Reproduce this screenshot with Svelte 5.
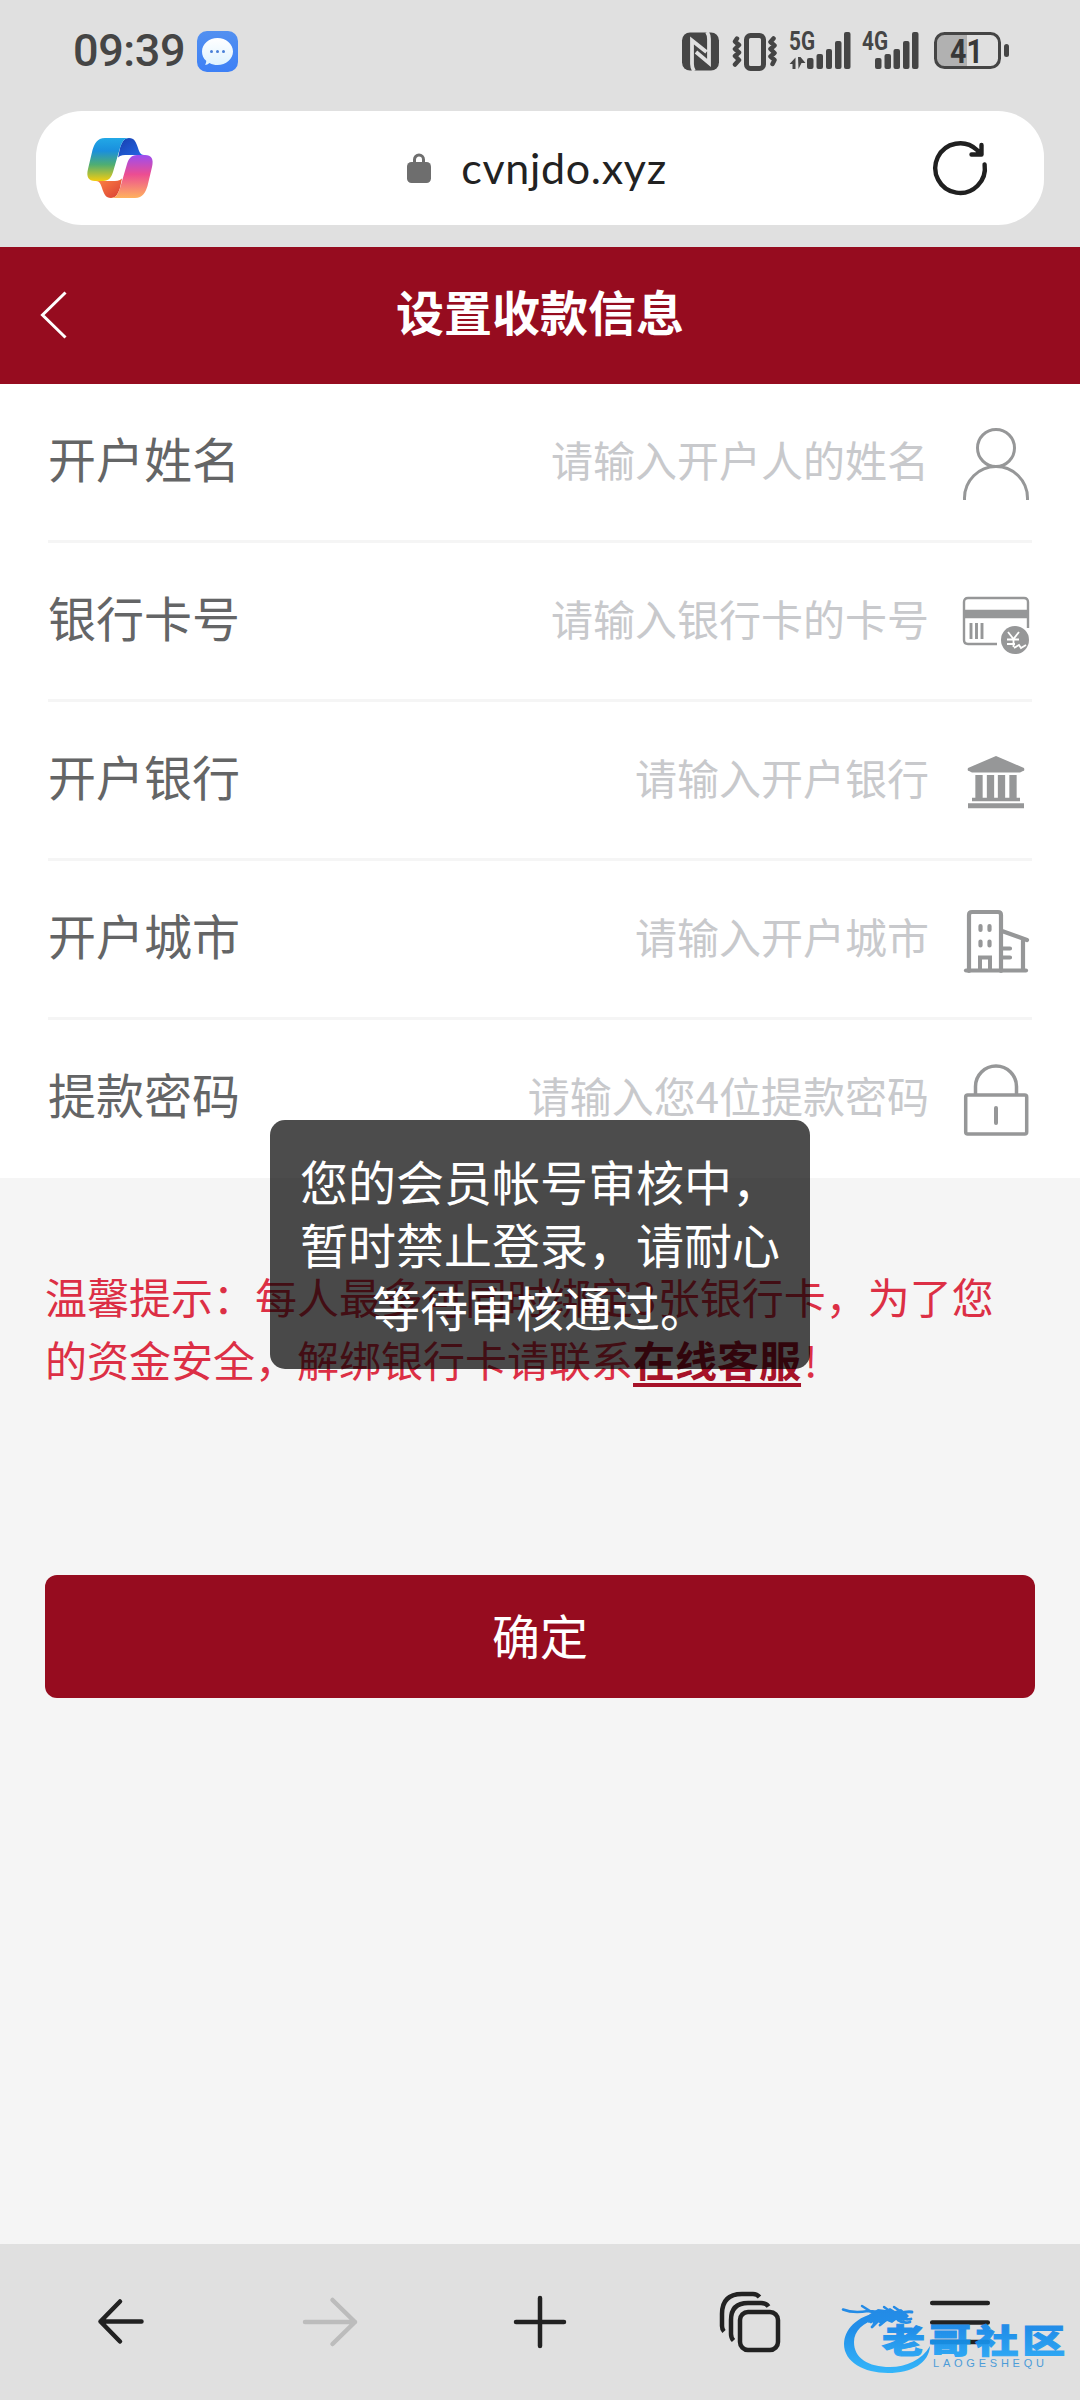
<script>
  const fields = [
    { label: '开户姓名', hint: '请输入开户人的姓名', icon: 'user' },
    { label: '银行卡号', hint: '请输入银行卡的卡号', icon: 'card' },
    { label: '开户银行', hint: '请输入开户银行', icon: 'bank' },
    { label: '开户城市', hint: '请输入开户城市', icon: 'city' },
    { label: '提款密码', hint: '请输入您4位提款密码', icon: 'lock' }
  ];
</script>

<div class="screen">
  <header class="chrome">
    <div class="status">
      <span class="time">09:39</span>
      <svg class="msg" width="41" height="41" viewBox="0 0 41 41">
        <defs>
          <linearGradient id="bubbleFill" x1="0" y1="0" x2="0" y2="1"><stop offset="0" stop-color="#fff" /><stop offset="1" stop-color="#dff3ff" /></linearGradient>
          <linearGradient id="tileFill" x1="0" y1="0" x2="0" y2="1"><stop offset="0" stop-color="#5290f0" /><stop offset="1" stop-color="#3d80f6" /></linearGradient>
        </defs>
        <rect width="41" height="41" rx="10" fill="url(#tileFill)" />
        <path d="M20.500 7C29 7 36 13 36 20.500S29 34 20.500 34c-3 0-5.500-.6-8-2-1.500 1.300-3 1.800-4.500 1.800 1-1.200 1.300-2.500 1.200-4C6.500 27.500 5 24.200 5 20.500 5 13 12 7 20.500 7z" fill="url(#bubbleFill)" />
        <g fill="#4a80d8"><circle cx="14.500" cy="20.500" r="1.500" /><circle cx="20.500" cy="20.500" r="1.500" /><circle cx="26.500" cy="20.500" r="1.500" /></g>
      </svg>
      <svg class="indicators" width="330" height="42" viewBox="0 0 330 42">
        <rect x="2" y="2.500" width="37" height="38" rx="8" fill="#454545" />
        <path d="M14 41q-2-3-2-7V10.500L26.500 22M27 2q2 3 2 7v24L16 22" fill="none" stroke="#e0e0e0" stroke-width="3.800" />
        <g fill="none" stroke="#454545">
          <rect x="66.500" y="5.500" width="17" height="33" rx="4" stroke-width="5" />
          <path d="M57 8.500l-2 3 4 3.500-4 4 4 3.500-4 3.500 4 4-4 4.500M93.500 8.500l-3 3.500 4 3.500-4 3.500 4 4-4 3.500 4 3.500-2 4" stroke-width="4.500" stroke-linecap="round" stroke-linejoin="round" />
        </g>
        <g class="net" fill="#454545">
          <text x="109" y="20" textLength="26" lengthAdjust="spacingAndGlyphs">5G</text>
          <text x="182" y="20" textLength="26" lengthAdjust="spacingAndGlyphs">4G</text>
        </g>
        <g fill="#454545">
          <path d="M109.500 34l6-6.500V39h-3v-5h-3zM118 27h2.500l5 6h-4L118.500 39z" />
          <rect x="127" y="28" width="6.500" height="11" rx="2" /><rect x="136.500" y="24" width="6.500" height="15" rx="2" /><rect x="146" y="19" width="6" height="20" rx="2" /><rect x="155" y="11" width="6.500" height="28" rx="2" /><rect x="164" y="2" width="6.500" height="37" rx="2" />
          <rect x="195" y="28" width="6.500" height="11" rx="2" /><rect x="204.500" y="24" width="6.500" height="15" rx="2" /><rect x="213.500" y="19" width="6.500" height="20" rx="2" /><rect x="223" y="11" width="6.500" height="28" rx="2" /><rect x="232" y="2" width="6.500" height="37" rx="2" />
          <rect x="324" y="14" width="5" height="13" rx="2.500" />
        </g>
        <path d="M264 4h23v32h-23q-8 0-8-8V12q0-8 8-8z" fill="#b1b1b1" />
        <rect x="255.500" y="3.500" width="64" height="34" rx="9" fill="none" stroke="#454545" stroke-width="3" />
        <text class="batt" x="270" y="32.500" textLength="33" lengthAdjust="spacingAndGlyphs" fill="#383838">41</text>
      </svg>
    </div>
    <div class="address">
      <svg class="copilot" width="66" height="60" viewBox="0 0 66 60">
        <defs>
          <linearGradient id="c1" x1="0" y1="0" x2="0" y2="1"><stop offset="0" stop-color="#22a8e6" /><stop offset=".3" stop-color="#1a8fdd" /><stop offset=".62" stop-color="#4fae72" /><stop offset="1" stop-color="#f4cc10" /></linearGradient>
          <linearGradient id="c2" x1="0" y1="0" x2="0" y2="1"><stop offset="0" stop-color="#9c4df0" /><stop offset=".45" stop-color="#ec4d92" /><stop offset="1" stop-color="#ffb25e" /></linearGradient>
          <linearGradient id="c3" x1="0" y1="0" x2="1" y2="1"><stop offset="0" stop-color="#173fae" /><stop offset="1" stop-color="#2569e8" /></linearGradient>
          <linearGradient id="c4" x1="0" y1="0" x2="1" y2="1"><stop offset="0" stop-color="#ff8643" /><stop offset="1" stop-color="#d93e35" /></linearGradient>
        </defs>
        <path d="M42 0c5.500 0 7 4 9 10 1.300 4 2.500 7 6 7H41c-4 0-7.500 0-10 2.500L33 10C35 4 37 0 42 0z" fill="url(#c3)" />
        <path d="M24 60c-5.500 0-7-4-9-10-1.300-4-2.500-7-6-7h16c4 0 7.500 0 10-2.500L33 50c-2 6-4 10-9 10z" fill="url(#c4)" />
        <path d="M42 0H18C10 0 7.500 6 5.500 12L1 31c-2 8 .5 12 7 12h8c6 0 8.500-4 10-9l7-24C35 4 37 0 42 0z" fill="url(#c1)" />
        <path d="M24 60h24c8 0 10.500-6 12.500-12L65 29c2-8-.5-12-7-12h-8c-6 0-8.500 4-10 9l-7 24c-2 6-4 10-9 10z" fill="url(#c2)" />
      </svg>
      <div class="url">
        <svg width="24" height="30" viewBox="0 0 24 30">
          <path d="M7.500 12V6.500a4.500 4.500 0 0 1 9 0V12" fill="none" stroke="#6e6e6e" stroke-width="3" />
          <rect y="9" width="24" height="21" rx="4.500" fill="#6e6e6e" />
        </svg>
        <span>cvnjdo.xyz</span>
      </div>
      <svg class="reload" width="54" height="54" viewBox="0 0 54 54" fill="none" stroke="#202020" stroke-width="4.400" stroke-linecap="round" stroke-linejoin="round">
        <path d="M51.600 23.500A24.800 24.800 0 1 1 44 9l4.500 4.500M48.500 4v9.500H38.500" />
      </svg>
    </div>
  </header>

  <nav class="title">
    <svg width="28" height="48" viewBox="0 0 28 48"><path d="M25.500 1.500L2.500 24l23 22.500" fill="none" stroke="#fff" stroke-width="3" /></svg>
    <h1>设置收款信息</h1>
  </nav>

  <main>
    <section class="form">
      {#each fields as f}
        <div class="row">
          <span class="label">{f.label}</span>
          <span class="hint">{f.hint}</span>
          <svg width="68" height="76" viewBox="0 0 68 76" fill="none" stroke="#969798" stroke-width="3">
            {#if f.icon === 'user'}
              <circle cx="34" cy="21" r="18.500" /><path d="M2.500 73V71a31.500 31.500 0 0 1 63 0v2" />
            {:else if f.icon === 'card'}
              <g transform="translate(0 -2)">
                <path d="M66 44V18q0-4-4-4H6q-4 0-4 4v38q0 4 4 4h29" stroke-width="2.400" />
                <path d="M2 30h64" stroke-width="8.500" />
                <path d="M9 39v16M14.500 39v16M20 39v16" stroke-width="2.900" />
                <circle cx="53" cy="56" r="14" fill="#969798" stroke="none" />
                <path d="M46 48l5.500 7 5.500-7M45 55.500h12M45 60h8M51.500 55v8M52 64l5-3 2 3 5-3" stroke="#fff" stroke-width="1.800" />
              </g>
            {:else if f.icon === 'bank'}
              <g transform="translate(0 -2)">
                <path d="M34 13l28 12q1 3-1 3l-3 1.500H10L7 28q-2 0-1-3z" fill="#969798" stroke="none" />
                <path d="M17 32v25M28.500 32v25M39.500 32v25M51 32v25" stroke-width="7.300" />
                <path d="M10 56.500h48" stroke-width="3.500" />
                <path d="M6 62.700h56" stroke-width="5" />
              </g>
            {:else if f.icon === 'city'}
              <path d="M7 67V11q0-3 3-3h26q3 0 3 3v56M40 27l25 9M61 36v30" stroke-width="4.200" stroke-linecap="round" />
              <path d="M4 66.500h60" stroke-width="4.200" stroke-linecap="round" />
              <path d="M18.500 22v4M27.500 22v4M18.500 37.500v4M27.500 37.500v4M40 44.500h8M40 53.500h8" stroke-width="4.200" stroke-linecap="round" />
              <path d="M18 66V53.500h10V66" stroke-width="4" />
            {:else}
              <g transform="translate(0 -1)">
                <path d="M13.500 34V24.500a20.500 20.500 0 0 1 41 0V34" stroke-width="3.500" />
                <rect x="3.700" y="33" width="61" height="39" rx="2" stroke-width="3.500" />
                <path d="M34 46v15" stroke-width="4" stroke-linecap="round" />
              </g>
            {/if}
          </svg>
        </div>
      {/each}
    </section>

    <p class="notice">温馨提示：每人最多可同时绑定<span class="num">3</span>张银行卡，为了您<br />的资金安全，解绑银行卡请联系<b>在线客服</b><span class="bang">!</span></p>
    <button>确定</button>
  </main>

  <footer>
    <svg width="60" height="60" viewBox="0 0 60 60"><path d="M51.500 29.500H10.500M30 9.500L10.500 29.500 30 49.500" /></svg>
    <svg class="off" width="60" height="60" viewBox="0 0 60 60"><path d="M5 30h50M32.500 8L55 30 32.500 52" /></svg>
    <svg width="60" height="60" viewBox="0 0 60 60"><path d="M6 30h48M30 6v48" /></svg>
    <svg width="60" height="60" viewBox="0 0 60 60"><rect x="20" y="20" width="38" height="38" rx="8" /><path class="cut" d="M4 39.500Q2 37.500 2 34V22Q2 2 22 2h11q4 0 6.500 3M13.500 48.500Q11 46 11 42V28q0-17 17-17h13q5 0 7.500 3.500" /></svg>
    <svg width="60" height="60" viewBox="0 0 60 60"><path d="M2.200 11h55.600M2.200 30.500h55.600M2.200 50h55.600" /></svg>
  </footer>

  <div class="toast">您的会员帐号审核中，<br />暂时禁止登录，请耐心<br />等待审核通过。</div>

  <svg class="mark" width="224" height="76" viewBox="0 0 224 76">
    <defs><linearGradient id="wm" gradientUnits="userSpaceOnUse" x1="0" y1="4" x2="0" y2="72"><stop offset="0" stop-color="#1583e6" /><stop offset=".35" stop-color="#1288ea" /><stop offset="1" stop-color="#27b4fd" /></linearGradient></defs>
    <g fill="url(#wm)">
      <path d="M38 10C14 14 2 28 2 42c0 18 20 29 44 29s41-10 42-27c-8 14-24 21-40 21-22 0-36-9-36-25 0-11 9-20 24-23z" />
      <path d="M28 12l8-5 8 1 4-2 5 3 6-2 4 3 4 4-5 5-8-1-4 3-5-2-6 3-3-2-6 5 1-5-5 1 2-4-6 1z" />
    </g>
    <g fill="none" stroke="url(#wm)" stroke-linecap="round">
      <path d="M1 7.500q10 4 25 1.500l10 2" stroke-width="2.600" />
      <path d="M20 4l8 5 9 1M42 5l7 5M52 5l6 4" stroke-width="2.400" />
      <path d="M58 12q6-3 12-2M58 16q6 2 11 1M56 18q6 4 12 2M38 17l-8 8M44 18l-6 5M33 17l-4 3" stroke-width="2.800" />
    </g>
    <text class="brand" x="40" y="51" textLength="187" lengthAdjust="spacingAndGlyphs" fill="url(#wm)" stroke="url(#wm)" stroke-width="1">老哥社区</text>
    <text class="latin" x="91" y="65" textLength="111" lengthAdjust="spacing">LAOGESHEQU</text>
  </svg>
</div>

<style>
  :global(body) { margin: 0; }
  .screen { position: relative; display: flex; flex-direction: column; width: 1080px; height: 2400px; background: #f5f5f5; font-family: "Noto Sans CJK SC", sans-serif; overflow: hidden; }
  svg { flex: none; display: block; overflow: visible; }
  .chrome { height: 247px; box-sizing: border-box; padding: 30px 36px 0; background: #e0e0e0; }
  .status { display: flex; align-items: center; height: 42px; padding-left: 37px; }
  .time { width: 124px; font: 500 45px/42px Roboto, sans-serif; letter-spacing: -.4px; color: #454545; white-space: nowrap; }
  .indicators { margin-left: auto; margin-right: 34px; }
  .indicators > rect:first-child { shape-rendering: auto; }
  .net { font: 700 25px Roboto, sans-serif; }
  .batt { font: 700 34px Roboto, sans-serif; }
  .address { display: flex; align-items: center; justify-content: space-between; height: 114px; margin-top: 39px; padding: 0 57px 0 51px; box-sizing: border-box; border-radius: 46px; background: #fff; }
  .url { display: flex; align-items: center; gap: 30px; margin-right: 12px; color: #222; font: 400 43px/60px Lato, sans-serif; letter-spacing: .7px; }
  .title { display: flex; align-items: center; height: 137px; box-sizing: border-box; padding: 0 40px 2px; background: #960c1f; color: #fff; }
  h1 { flex: 1; margin: 0 28px 10px 0; text-align: center; font-size: 48px; line-height: 64px; font-weight: 700; }
  main { flex: 1; }
  .form { height: 794px; background: #fff; }
  .row { display: flex; align-items: center; height: 159px; box-sizing: border-box; margin: 0 48px; border-bottom: 3px solid #f5f5f5; }
  .row:last-child { height: 158px; border-color: transparent; }
  .row svg { margin: 6px 2px 0 0; }
  .label { margin-bottom: 10px; font-size: 48px; color: #646566; }
  .hint { margin-left: auto; margin-right: 33px; margin-bottom: 7px; font-size: 42px; color: #c8c9cc; }
  .notice { margin: 86px 45px 0; font-size: 42px; line-height: 63px; color: #dc2f45; white-space: nowrap; }
  .notice b { color: #a61229; text-decoration: underline; text-decoration-thickness: 4px; text-underline-offset: 6px; }
  .num { letter-spacing: 1.500px; }
  .bang { margin-left: 3px; }
  button { display: block; width: 990px; height: 123px; margin: 185px 45px 0; padding: 0 0 5px; border: 0; border-radius: 12px; background: #960c1f; color: #fff; font: 400 48px "Noto Sans CJK SC", sans-serif; }
  footer { display: flex; align-items: center; justify-content: space-between; height: 156px; box-sizing: border-box; padding: 0 90px; background: #e0e0e0; }
  footer svg { fill: none; stroke: #222; stroke-width: 4.500; stroke-linecap: round; stroke-linejoin: round; }
  footer .off { stroke: #bcbcbc; }
  footer .cut { stroke-linecap: butt; }
  .toast { position: absolute; left: 270px; top: 1120px; width: 540px; height: 249px; box-sizing: border-box; padding-top: 29px; border-radius: 15px; background: rgba(0, 0, 0, .7); color: #fff; font-size: 48px; line-height: 63px; text-align: center; white-space: nowrap; }
  .mark { position: absolute; left: 842px; top: 2302px; opacity: .92; }
  .brand { font: 900 33px "Noto Sans CJK SC", sans-serif; letter-spacing: 3px; }
  .latin { font: 400 11px "Liberation Sans", sans-serif; fill: #3f97d8; }
</style>
